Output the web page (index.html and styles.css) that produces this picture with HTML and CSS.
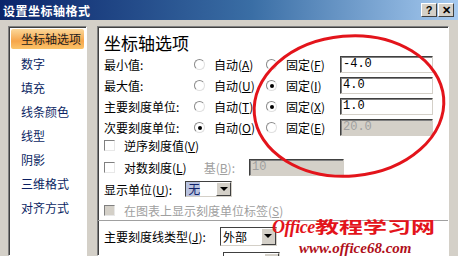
FILE: index.html
```html
<!DOCTYPE html>
<html lang="zh-CN">
<head>
  <meta charset="UTF-8">
  <title>设置坐标轴格式</title>
  <link rel="stylesheet" href="styles.css">
</head>
<body>
  <div class="titlebar">
    <span class="title">设置坐标轴格式</span>
    <span class="tbtn">?</span>
    <span class="tbtn">✕</span>
  </div>
  <div class="dialog">
    <ul class="nav">
      <li class="active">坐标轴选项</li>
      <li>数字</li>
      <li>填充</li>
      <li>线条颜色</li>
      <li>线型</li>
      <li>阴影</li>
      <li>三维格式</li>
      <li>对齐方式</li>
    </ul>
    <div class="panel">
      <h2>坐标轴选项</h2>
      <div class="grid">
        <span>最小值:</span>
        <label class="opt"><i class="radio"></i><span>自动(<u>A</u>)</span></label>
        <label class="opt"><i class="radio"></i><span>固定(<u>F</u>)</span></label>
        <span class="field">-4.0</span>

        <span>最大值:</span>
        <label class="opt"><i class="radio"></i><span>自动(<u>U</u>)</span></label>
        <label class="opt"><i class="radio on"></i><span>固定(<u>I</u>)</span></label>
        <span class="field">4.0</span>

        <span>主要刻度单位:</span>
        <label class="opt"><i class="radio"></i><span>自动(<u>T</u>)</span></label>
        <label class="opt"><i class="radio on"></i><span>固定(<u>X</u>)</span></label>
        <span class="field">1.0</span>

        <span>次要刻度单位:</span>
        <label class="opt"><i class="radio on"></i><span>自动(<u>O</u>)</span></label>
        <label class="opt"><i class="radio"></i><span>固定(<u>E</u>)</span></label>
        <span class="field off">20.0</span>
      </div>

      <div class="line"><i class="check"></i><span>逆序刻度值(<u>V</u>)</span></div>
      <div class="line">
        <i class="check"></i><span>对数刻度(<u>L</u>)</span>
        <span class="dim base">基(<u>B</u>):</span>
        <span class="field off wide">10</span>
      </div>
      <div class="line">
        <span>显示单位(<u>U</u>):</span>
        <span class="select small"><span class="val hl">无</span><span class="drop"></span></span>
      </div>
      <div class="line short dim"><i class="check off"></i><span>在图表上显示刻度单位标签(<u>S</u>)</span></div>
      <hr>
      <div class="line">
        <span>主要刻度线类型(<u>J</u>):</span>
        <span class="select major"><span class="val">外部</span><span class="drop"></span></span>
      </div>
      <div class="line">
        <span class="select major next"><span class="val"></span><span class="drop"></span></span>
      </div>

      <svg class="ring" width="200" height="150" viewBox="0 0 200 150">
        <ellipse cx="100" cy="75" rx="95" ry="70" fill="none" stroke="#e3141b" stroke-width="3" transform="rotate(-5 100 75)"/>
      </svg>
      <div class="mark">
        <div class="brand">Office<span class="cn">教程学习网</span></div>
        <div class="url">www.office68.com</div>
      </div>
    </div>
  </div>
</body>
</html>
```

FILE: styles.css
```css
* { box-sizing: border-box; }
body { margin: 0; width: 458px; height: 256px; overflow: hidden; background: #d4d0c8; font-family: "Noto Sans CJK SC", "Liberation Sans", sans-serif; font-size: 12px; color: #000; }
u { text-decoration: underline; }

.titlebar { height: 20px; display: flex; align-items: center; padding: 0 4px 0 3px; gap: 1px; background: linear-gradient(to right, #0a246a, #3a6ea5 55%, #a6caf0); }
.title { flex: 1; color: #fff; font-weight: bold; font-size: 12px; letter-spacing: 0.5px; }
.tbtn { width: 16px; height: 14px; background: #d4d0c8; border: 1px solid; border-color: #fff #404040 #404040 #fff; font: bold 11px "Liberation Sans", sans-serif; display: flex; align-items: center; justify-content: center; line-height: 1; }

.dialog { display: flex; gap: 10px; padding: 6px 9px 0 8px; height: 236px; }

.nav { list-style: none; margin: 0; padding: 2px 2px; width: 79px; background: #fff; border: 1px solid; border-color: #808080 #fff #fff #808080; box-shadow: inset 1px 1px 0 #404040; }
.nav li { height: 24px; line-height: 22px; padding-left: 10px; color: #0b1f63; }
.nav li.active { height: 20px; line-height: 20px; margin-bottom: 4px; border-radius: 2px; background: linear-gradient(#fbd89a, #f6a54a 60%, #fbc46a); color: #1b1b1b; }

.panel { position: relative; flex: 1; background: #fff; border: 1px solid; border-color: #808080 #fff #fff #808080; box-shadow: inset 1px 1px 0 #404040; padding: 5px 0 0 6px; white-space: nowrap; }
h2 { margin: 0 0 2px; font-size: 17px; font-weight: normal; line-height: 22px; }

.grid { display: grid; grid-template-columns: 90px 72px 74px 93px; grid-auto-rows: 17px; row-gap: 4px; align-items: center; }
.opt { display: flex; align-items: center; gap: 9px; }
.radio { flex: none; width: 11px; height: 11px; border-radius: 50%; background: #fff; border: 1px solid #8a8a8a; border-bottom-color: #e0e0e0; border-right-color: #e0e0e0; display: flex; align-items: center; justify-content: center; }
.radio.on::after { content: ""; width: 4px; height: 4px; border-radius: 50%; background: #000; }

.field { height: 17px; line-height: 15px; padding-left: 2px; background: #fff; border: 1px solid; border-color: #404040 #d4d0c8 #d4d0c8 #404040; box-shadow: inset 1px 1px 0 #808080; font-family: "Liberation Mono", monospace; font-size: 12px; }
.field.off { background: #d4d0c8; color: #a0a0a0; }
.field.wide { width: 95px; margin-left: 14px; }

.line { height: 22px; display: flex; align-items: center; }
.line.short { height: 20px; }
.grid + .line { margin-top: -2px; }
.check { flex: none; width: 11px; height: 11px; margin-right: 9px; background: #fff; border: 1px solid; border-color: #808080 #e8e8e8 #e8e8e8 #808080; }
.check.off { background: #d4d0c8; }
.dim { color: #a0a0a0; }
.base { margin-left: 17px; }

.select { display: flex; align-items: stretch; border: 1px solid; border-color: #404040 #d4d0c8 #d4d0c8 #404040; background: #fff; }
.select .val { flex: 1; padding-left: 2px; line-height: 14px; }
.select .val.hl { flex: none; width: 14px; margin-right: auto; background: #b8c2df; color: #10226a; }
.drop { width: 15px; background: #d4d0c8; border: 1px solid; border-color: #fff #404040 #404040 #fff; display: flex; align-items: center; justify-content: center; }
.drop::after { content: ""; border: 4px solid transparent; border-top: 4px solid #000; border-bottom: 0; }
.select.small { width: 47px; height: 16px; margin-left: 13px; }
.select.major { width: 57px; height: 19px; margin-left: 14px; }
.select.major .val { line-height: 17px; }
.select.next { margin-left: 119px; margin-top: 6px; }

hr { margin: 0 0 4px -6px; border: 0; border-top: 1px solid #a0a0a0; }

.ring { position: absolute; left: 151px; top: 4px; }
.mark { position: absolute; left: 174px; top: 187px; line-height: 1; }
.brand { display: flex; align-items: baseline; color: #e3141b; font: italic bold 18px "Liberation Serif", serif; letter-spacing: -0.5px; }
.cn { display: inline-block; font: bold 16px "Noto Sans CJK SC", sans-serif; letter-spacing: 0; transform: scaleX(1.5); transform-origin: left; }
.url { margin: 2px 0 0 27px; color: #b0101a; font: italic bold 15px "Liberation Serif", serif; }
```
